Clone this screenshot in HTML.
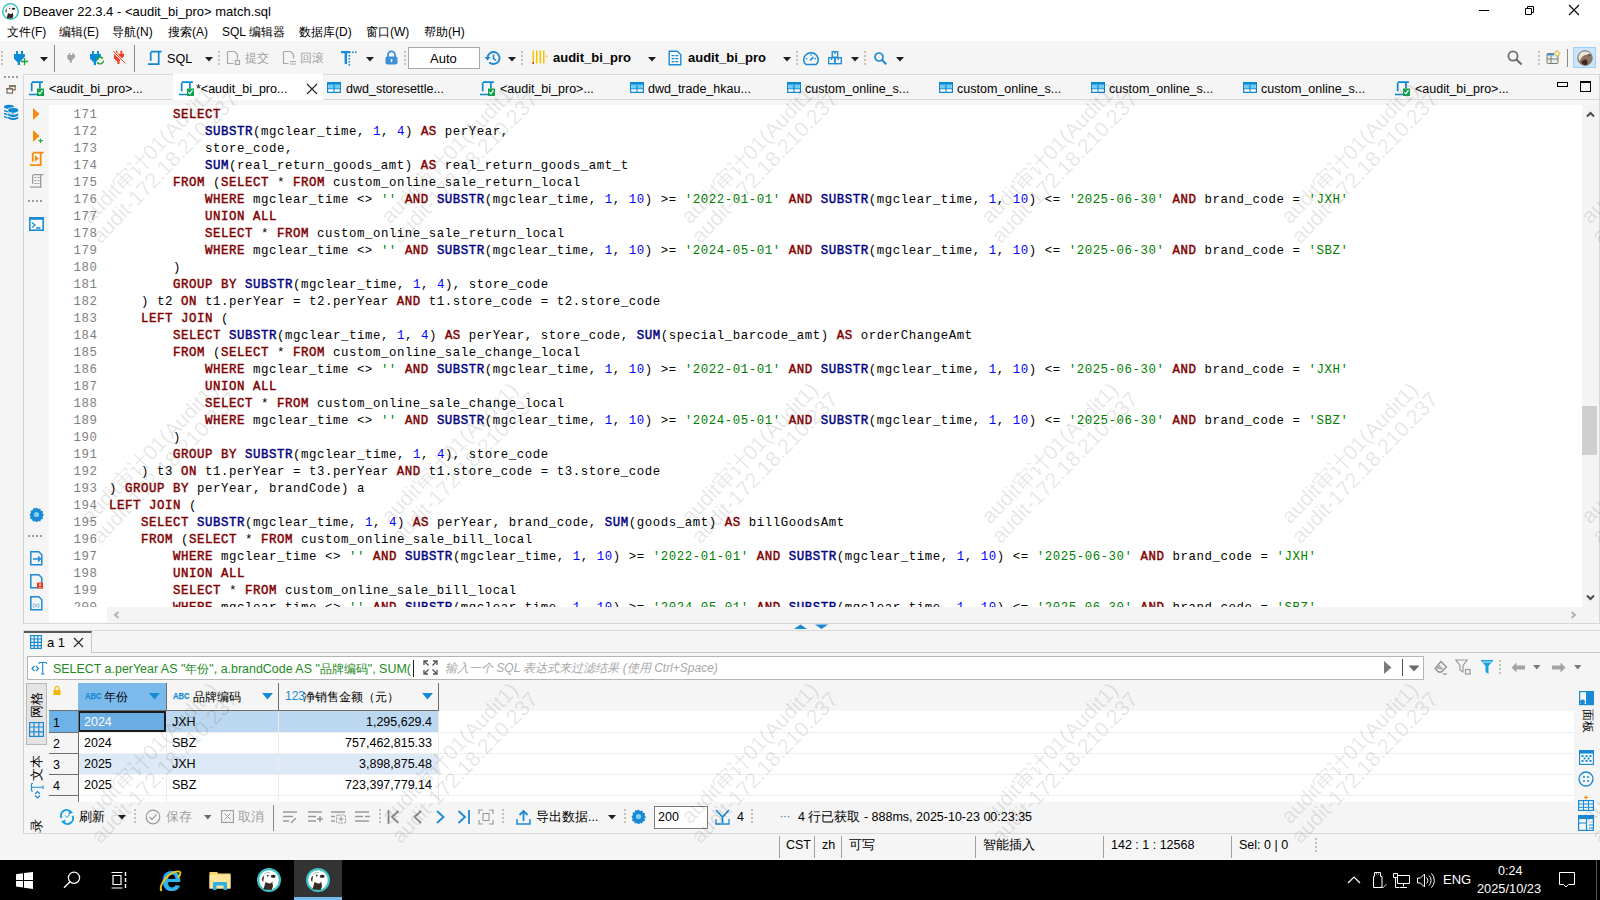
<!DOCTYPE html>
<html><head><meta charset="utf-8">
<style>
*{margin:0;padding:0;box-sizing:border-box}
html,body{width:1600px;height:900px;overflow:hidden;background:#f5f5f5;font-family:"Liberation Sans",sans-serif;font-size:12px;color:#000}
.a{position:absolute}
#title{left:0;top:0;width:1600px;height:22px;background:#fff}
#menu{left:0;top:22px;width:1600px;height:19px;background:#fff}
#tb{left:0;top:41px;width:1600px;height:33px;background:#f5f5f5}
#tabs{left:23px;top:74px;width:1577px;height:26px;background:#f5f5f5;border-top:1px solid #d8d8d8;border-bottom:1px solid #d8d8d8;border-left:1px solid #d8d8d8;border-right:1px solid #d8d8d8}
#lstrip{left:0;top:74px;width:23px;height:760px;background:#f5f5f5}
#editor{left:23px;top:100px;width:1577px;height:523px;background:#f5f5f5;border-left:1px solid #d0d0d0;border-right:1px solid #d8d8d8}
#ruler{left:24px;top:100px;width:25px;height:523px;background:#f5f5f5}
#code{left:49px;top:105px;width:1533px;height:502px;background:#fff;overflow:hidden}
#vscroll{left:1582px;top:105px;width:17px;height:518px;background:#f4f4f4}
#hscroll{left:107px;top:607px;width:1475px;height:16px;background:#f4f4f4}
#gutwhite{left:49px;top:607px;width:58px;height:16px;background:#fff}
#sash{left:23px;top:623px;width:1577px;height:8px;background:#f5f5f5;border-top:1px solid #d8d8d8;border-bottom:1px solid #d8d8d8}
#results{left:23px;top:631px;width:1577px;height:203px;background:#f5f5f5;border-left:1px solid #d0d0d0;border-bottom:1px solid #d8d8d8}
#status{left:0;top:834px;width:1600px;height:26px;background:#f5f5f5}
#taskbar{left:0;top:860px;width:1600px;height:40px;background:#000}
pre,.mono{font-family:"Liberation Mono",monospace;font-size:12.4px;letter-spacing:0.56px}
.ln{position:absolute;line-height:17px;height:17px;left:0;width:48.5px;text-align:right;color:#808080}
.cl{position:absolute;line-height:17px;height:17px;left:60px;white-space:pre;color:#000}
.k{color:#800000;font-weight:normal;-webkit-text-stroke:0.45px #800000}
.f{color:#000080;font-weight:normal;-webkit-text-stroke:0.45px #000080}
.n{color:#0000ff}
.s{color:#008000}
.mi{top:2px;font-size:12px;line-height:16px;white-space:nowrap}
.tt{top:6px;font-size:12.5px;line-height:16px;white-space:nowrap}
.rot{transform:rotate(-90deg);transform-origin:0 0;font-size:12.5px;line-height:16px;white-space:nowrap}
.rot90{transform:rotate(90deg);transform-origin:0 0;font-size:12px;line-height:14px;white-space:nowrap}
.vt{writing-mode:vertical-rl;font-size:12px;line-height:12px;white-space:nowrap}
.abc{font-size:9.4px;line-height:10px;font-weight:bold;color:#1a8ad4;letter-spacing:0;-webkit-text-stroke:0.25px #1a8ad4;transform:scaleX(0.82);transform-origin:0 0}
.hd{top:689px;font-size:11.7px;line-height:16px;white-space:nowrap}
.gc{font-size:12.5px;line-height:16px;white-space:nowrap}
.gr{width:152px;text-align:right}
.bt{top:809px;font-size:12.5px;line-height:16px;white-space:nowrap}
.sep{top:836px;width:1px;height:22px;background:#a0a0a0}
.st{top:837px;font-size:12.5px;line-height:16px;white-space:nowrap}
.wm{width:260px;height:42px;text-align:center;font-size:21.2px;line-height:21px;color:rgba(0,0,0,0.11);transform:rotate(-46deg);white-space:nowrap}
</style></head><body>
<svg width="0" height="0" style="position:absolute">
<defs>
<symbol id="plug" viewBox="0 0 16 16"><path d="M4 0.9h1.9v3.2H4zM9 0.9h2v3.2H9z"/><path d="M2 3.9H12.9V6.5L8 12V14.9H5.8V12.5L2 8.8Z"/></symbol>
<symbol id="dd" viewBox="0 0 8 5"><path d="M0 0h8L4 4.5z" fill="#1e1e1e"/></symbol>
<symbol id="grip" viewBox="0 0 3 16"><g fill="#c9bfae"><rect x="0" y="0" width="2" height="2"/><rect x="0" y="4" width="2" height="2"/><rect x="0" y="8" width="2" height="2"/><rect x="0" y="12" width="2" height="2"/></g></symbol>
<symbol id="sqlic" viewBox="0 0 16 16"><path d="M5 2.6H15.6M4.7 3V11.8M12.7 2.6V15.9M1.9 15.1H12.9" fill="none" stroke="#0a88d4" stroke-width="1.7"/></symbol>
<symbol id="tbl" viewBox="0 0 14 11"><rect x="0.6" y="0.6" width="12.8" height="9.8" fill="#fff" stroke="#0a88d4" stroke-width="1.2"/><rect x="0" y="0" width="14" height="2.8" fill="#0a88d4"/><rect x="1.2" y="2.8" width="11.6" height="3.4" fill="#6ccdf0"/><path d="M0.6 6.7H13.4M7 2.8V10.4" stroke="#0a88d4" stroke-width="1.1"/></symbol>
<symbol id="scr" viewBox="0 0 16 16"><path d="M4 2.6H14.9M3.7 3V11.8M11.9 2.6V9M0.9 15H9" fill="none" stroke="#0a88d4" stroke-width="1.7"/><rect x="9" y="9" width="7" height="7.6" fill="#12a34a"/><path d="M10.3 12.6l1.6 1.8 2.6-3.8" fill="none" stroke="#fff" stroke-width="1.1"/></symbol>
<symbol id="beaver" viewBox="0 0 24 24"><circle cx="12" cy="12" r="10.9" fill="#fff" stroke="#3ec4c8" stroke-width="2.2"/><path d="M6.5 21.5L8.5 14Q11.5 16 14 15.2L15.3 13.5L16 18.5L14.5 22Z" fill="#3a2a22"/><ellipse cx="16.2" cy="8.2" rx="2.4" ry="1.5" fill="#2a1e18"/><circle cx="10.8" cy="7.6" r="0.9" fill="#2a1e18"/><path d="M4.8 12Q5 8.5 7.2 7.8L6.2 14Z" fill="#4a3a30"/><path d="M6.5 6.5Q9.5 3.8 13 4.5" fill="none" stroke="#999" stroke-width="0.7"/></symbol></defs></svg>
<div id="title" class="a">
<svg class="a" style="left:2px;top:3px" width="17" height="17" viewBox="0 0 24 24"><use href="#beaver"/></svg>
<div class="a" id="ttxt" style="left:23px;top:4px;font-size:13px;line-height:16px;white-space:nowrap">DBeaver 22.3.4 - &lt;audit_bi_pro&gt; match.sql</div>
<svg class="a" style="left:1477px;top:4px" width="14" height="14"><path d="M2 6.5H12" stroke="#000" stroke-width="1"/></svg>
<svg class="a" style="left:1522px;top:3px" width="14" height="14"><path d="M3.5 5.5h6v6h-6z M5.5 5.5v-2h6v6h-2" fill="none" stroke="#000" stroke-width="1"/></svg>
<svg class="a" style="left:1567px;top:3px" width="14" height="14"><path d="M2 2L12 12M12 2L2 12" stroke="#000" stroke-width="1.1"/></svg>
</div>
<div id="menu" class="a">
<span class="a mi" style="left:7px">文件(F)</span>
<span class="a mi" style="left:59px">编辑(E)</span>
<span class="a mi" style="left:112px">导航(N)</span>
<span class="a mi" style="left:168px">搜索(A)</span>
<span class="a mi" style="left:222px">SQL 编辑器</span>
<span class="a mi" style="left:299px">数据库(D)</span>
<span class="a mi" style="left:366px">窗口(W)</span>
<span class="a mi" style="left:424px">帮助(H)</span>
</div>
<div id="tb" class="a">
<svg class="a" style="left:1px;top:10px" width="3" height="16"><use href="#grip"/></svg>
<svg class="a" style="left:12px;top:9px;fill:#0a8bd6" width="16" height="16" viewBox="0 0 16 16"><use href="#plug"/></svg>
<svg class="a" style="left:20px;top:16px" width="9" height="9"><path d="M4.5 1v7.2M1 4.5h7.2" stroke="#14a83a" stroke-width="1.3"/></svg>
<svg class="a" style="left:40px;top:16px" width="8" height="5"><use href="#dd"/></svg>
<div class="a" style="left:54px;top:4px;width:1px;height:27px;background:#8a8a8a"></div>
<svg class="a" style="left:66px;top:10px;fill:#a2a2a2" width="13" height="14" viewBox="1 0 13 16"><use href="#plug"/></svg>
<svg class="a" style="left:88px;top:9px;fill:#0a8bd6" width="16" height="16" viewBox="0 0 16 16"><use href="#plug"/></svg>
<svg class="a" style="left:95px;top:15px" width="10" height="9"><path d="M1.5 4.5a3.5 3.5 0 0 1 6-2.3M8.5 4.5a3.5 3.5 0 0 1-6 2.3" fill="none" stroke="#1fa33a" stroke-width="1.3"/><path d="M6.5 0.5l2 2-2.2.6zM3.5 8.5l-2-2 2.2-.6z" fill="#1fa33a"/></svg>
<svg class="a" style="left:112px;top:9px;fill:#f03c1e" width="15" height="15" viewBox="0 0 16 16"><use href="#plug"/></svg>
<svg class="a" style="left:113px;top:10px" width="13" height="13"><path d="M0.5 0.5L12.5 12.5" stroke="#f7f7f7" stroke-width="2.4"/><path d="M0.5 0.5L12.5 12.5" stroke="#f03c1e" stroke-width="1"/></svg>
<div class="a" style="left:134px;top:4px;width:1px;height:27px;background:#8a8a8a"></div>
<svg class="a" style="left:146px;top:8px" width="16" height="16" viewBox="0 0 16 16"><use href="#sqlic"/></svg>
<span class="a" style="left:167px;top:10px;font-size:12.6px;line-height:16px">SQL</span>
<svg class="a" style="left:205px;top:16px" width="8" height="5"><use href="#dd"/></svg>
<svg class="a" style="left:218px;top:10px" width="3" height="16"><use href="#grip"/></svg>
<svg class="a" style="left:226px;top:9px" width="15" height="16"><path d="M1.5 1.5h7l3 3v5M1.5 1.5v12h6" fill="none" stroke="#a8a8a8" stroke-width="1.2"/><rect x="9.5" y="10.5" width="4" height="4" fill="none" stroke="#a8a8a8" stroke-width="1.2"/></svg>
<span class="a" style="left:245px;top:9px;font-size:12px;line-height:16px;color:#a0a0a0">提交</span>
<svg class="a" style="left:282px;top:9px" width="15" height="16"><path d="M1.5 1.5h7l3 3v4M1.5 1.5v12h5" fill="none" stroke="#a8a8a8" stroke-width="1.2"/><path d="M8 11.5h6M8 14h6" stroke="#a8a8a8" stroke-width="1"/></svg>
<span class="a" style="left:300px;top:9px;font-size:12px;line-height:16px;color:#a0a0a0">回滚</span>
<svg class="a" style="left:341px;top:9px" width="16" height="16"><path d="M0 1h9.5v2.3H6V14H3.6V3.3H0z" fill="#1a8ad4"/><g fill="#1a8ad4"><rect x="11" y="1.5" width="1.6" height="1.6"/><rect x="14" y="1.5" width="1.6" height="1.6"/><rect x="7.5" y="5" width="1.6" height="1.6"/><rect x="7.5" y="8" width="1.6" height="1.6"/><rect x="7.5" y="11" width="1.6" height="1.6"/><rect x="7.5" y="14" width="1.6" height="1.6"/></g></svg>
<svg class="a" style="left:366px;top:16px" width="8" height="5"><use href="#dd"/></svg>
<svg class="a" style="left:385px;top:9px" width="13" height="15"><path d="M3 7.5V4.8a3.5 3.5 0 0 1 7 0V7.5" fill="none" stroke="#3d8fd8" stroke-width="1.8"/><rect x="0.5" y="6.5" width="12" height="8" rx="2" fill="#3d8fd8"/><rect x="5.7" y="9" width="1.6" height="3" fill="#fff"/></svg>
<svg class="a" style="left:404px;top:10px" width="3" height="16"><use href="#grip"/></svg>
<div class="a" style="left:408px;top:6px;width:72px;height:22px;background:#fff;border:1px solid #a8a8a8"></div>
<span class="a" style="left:430px;top:10px;font-size:13px;line-height:16px">Auto</span>
<svg class="a" style="left:484px;top:9px" width="17" height="16"><path d="M3.5 8a6 6 0 1 1 1.8 4.3" fill="none" stroke="#1a8ad4" stroke-width="1.8"/><path d="M0.5 7h6l-3 3.5z" fill="#1a8ad4"/><path d="M9.5 4.5v4l2.5 2" fill="none" stroke="#1a8ad4" stroke-width="1.6"/></svg>
<svg class="a" style="left:508px;top:16px" width="8" height="5"><use href="#dd"/></svg>
<svg class="a" style="left:521px;top:10px" width="3" height="16"><use href="#grip"/></svg>
<svg class="a" style="left:532px;top:9px" width="16" height="15"><g fill="#f5c400"><rect x="0.5" y="0.5" width="1.5" height="13"/><rect x="4" y="0.5" width="1.5" height="13"/><rect x="7.5" y="0.5" width="1.5" height="13"/><rect x="11" y="0.5" width="1.5" height="13"/><rect x="13.8" y="5.5" width="1.5" height="1.5"/></g><rect x="0.5" y="12" width="1.5" height="2" fill="#e52d2d"/></svg>
<span class="a" style="left:553px;top:9px;font-size:13px;line-height:16px;font-weight:bold">audit_bi_pro</span>
<svg class="a" style="left:648px;top:16px" width="8" height="5"><use href="#dd"/></svg>
<svg class="a" style="left:668px;top:9px" width="14" height="16"><path d="M1.2 1.2h8l3.6 3.6v10H1.2z" fill="#fff" stroke="#1a8ad4" stroke-width="1.4"/><g fill="#1a8ad4"><rect x="3.5" y="5" width="3" height="1.3"/><rect x="7.3" y="5" width="3" height="1.3"/><rect x="3.5" y="8" width="3" height="1.3"/><rect x="7.3" y="8" width="3" height="1.3"/><rect x="3.5" y="11" width="3" height="1.3"/><rect x="7.3" y="11" width="3" height="1.3"/></g></svg>
<span class="a" style="left:688px;top:9px;font-size:13px;line-height:16px;font-weight:bold">audit_bi_pro</span>
<svg class="a" style="left:783px;top:16px" width="8" height="5"><use href="#dd"/></svg>
<svg class="a" style="left:796px;top:10px" width="3" height="16"><use href="#grip"/></svg>
<svg class="a" style="left:802px;top:9px" width="18" height="16"><path d="M2.2 12.2A7.2 7.2 0 1 1 15.8 12.2L14 14.6H4Z" fill="none" stroke="#1a8ad4" stroke-width="1.5" stroke-linejoin="round"/><path d="M8 10.5l3.5-3.5" stroke="#1a8ad4" stroke-width="1.7"/><g fill="#1a8ad4"><rect x="4" y="8" width="1.4" height="1.4"/><rect x="8.3" y="4.3" width="1.4" height="1.4"/><rect x="12.6" y="8" width="1.4" height="1.4"/></g></svg>
<svg class="a" style="left:828px;top:10px" width="14" height="14"><g fill="none" stroke="#1a8ad4" stroke-width="1.3"><rect x="4.2" y="0.7" width="5.5" height="5.5"/><rect x="0.7" y="6.7" width="6.3" height="6"/><rect x="7" y="6.7" width="6.3" height="6"/></g><g fill="#1a8ad4"><rect x="6.3" y="1" width="1.3" height="2"/><rect x="3" y="7" width="1.3" height="2"/><rect x="9.5" y="7" width="1.3" height="2"/></g></svg>
<svg class="a" style="left:851px;top:16px" width="8" height="5"><use href="#dd"/></svg>
<svg class="a" style="left:864px;top:10px" width="3" height="16"><use href="#grip"/></svg>
<svg class="a" style="left:874px;top:11px" width="13" height="13"><circle cx="5" cy="5" r="4" fill="none" stroke="#1a8ad4" stroke-width="1.7"/><path d="M8 8l4.2 4.2" stroke="#1a8ad4" stroke-width="2"/></svg>
<svg class="a" style="left:896px;top:16px" width="8" height="5"><use href="#dd"/></svg>
<svg class="a" style="left:1507px;top:9px" width="16" height="16"><circle cx="6" cy="6" r="4.6" fill="none" stroke="#707070" stroke-width="1.8"/><path d="M9.5 9.5l5 5" stroke="#707070" stroke-width="2.2"/></svg>
<svg class="a" style="left:1538px;top:10px" width="3" height="16"><use href="#grip"/></svg>
<svg class="a" style="left:1546px;top:9px" width="15" height="15"><rect x="1" y="3.5" width="11" height="10" rx="1" fill="#dff0fb" stroke="#8a7a58" stroke-width="1"/><rect x="1" y="3.5" width="7" height="2" fill="#4a90d9"/><path d="M1 9h11M5 5.5v8" stroke="#8a7a58" stroke-width="1"/><path d="M11 0.5l3 3-3 3-3-3z" fill="#fff7d0" stroke="#c89a10" stroke-width="1"/></svg>
<div class="a" style="left:1567px;top:8px;width:1px;height:18px;background:#8a8a8a"></div>
<div class="a" style="left:1573px;top:6px;width:23px;height:21px;background:#cce4f7;border:1px solid #99d1ff"></div>
<svg class="a" style="left:1577px;top:9px" width="16" height="16"><circle cx="8" cy="8" r="7.5" fill="#8f7565"/><path d="M1.5 6.5Q3 1 9 1.2Q12.5 1.8 14 4.5Q10 3.5 6 6Q3.5 8 2.5 11Q1.2 9 1.5 6.5z" fill="#efe6da"/><path d="M4 12.5Q6 9 9 9.5Q11 10 10.5 15Q7 16 4 12.5z" fill="#3a2a22"/><path d="M11.5 4.5l1.5 1" stroke="#2a1e18" stroke-width="1.2"/><circle cx="8" cy="8" r="7.4" fill="none" stroke="#777" stroke-width="0.6"/></svg>
</div>
<div id="lstrip" class="a">
<svg class="a" style="left:4px;top:2px" width="16" height="3"><g fill="#a09a90"><rect x="0" y="0" width="2" height="2"/><rect x="4" y="0" width="2" height="2"/><rect x="8" y="0" width="2" height="2"/><rect x="12" y="0" width="2" height="2"/></g></svg>
<svg class="a" style="left:6px;top:11px" width="10" height="9"><path d="M3.8 0.8h5.4v4h-5.4z" fill="none" stroke="#7a6e5e" stroke-width="1.2"/><rect x="3.2" y="0.2" width="6.6" height="1.6" fill="#7a6e5e"/><rect x="1" y="3.5" width="5.5" height="4.6" fill="#fff" stroke="#7a6e5e" stroke-width="1.2"/><rect x="0.4" y="3" width="6.6" height="1.6" fill="#7a6e5e"/></svg>
<svg class="a" style="left:3px;top:30px" width="17" height="17"><g fill="#0a88d4"><ellipse cx="6" cy="2.8" rx="5" ry="2"/><path d="M1 5.8Q6 8.5 11 5.8V7.2Q6 10 1 7.2z"/><path d="M1 8.8Q6 11.5 11 8.8V10.2Q6 13 1 10.2z"/><path d="M1 11.8Q6 14.5 11 11.8V13.2Q6 16 1 13.2z"/></g><g fill="#0a88d4" stroke="#f5f5f5" stroke-width="1.2" paint-order="stroke"><ellipse cx="10.2" cy="6.3" rx="5" ry="2.4"/><path d="M5.2 9.3Q10.2 12.3 15.2 9.3V11.5Q10.2 14.5 5.2 11.5z"/><path d="M5.2 12.5Q10.2 15.5 15.2 12.5V14.6Q10.2 17.6 5.2 14.6z"/></g></svg>
</div>
<div id="tabs" class="a">
<div class="a" style="left:149px;top:-1px;width:150px;height:26px;background:#fff"></div>
<svg class="a" style="left:4px;top:4px" width="16" height="17" viewBox="0 0 16 17"><use href="#scr"/></svg>
<span class="a tt" style="left:25px">&lt;audit_bi_pro&gt;...</span>
<svg class="a" style="left:154px;top:4px" width="16" height="17" viewBox="0 0 16 17"><use href="#scr"/></svg>
<span class="a tt" style="left:172px">*&lt;audit_bi_pro...</span>
<svg class="a" style="left:282px;top:8px" width="12" height="12"><path d="M1 1L11 11M11 1L1 11" stroke="#222" stroke-width="1.1"/></svg>
<svg class="a" style="left:303px;top:7px" width="14" height="11" viewBox="0 0 14 11"><use href="#tbl"/></svg>
<span class="a tt" style="left:322px">dwd_storesettle...</span>
<svg class="a" style="left:455px;top:4px" width="16" height="17" viewBox="0 0 16 17"><use href="#scr"/></svg>
<span class="a tt" style="left:476px">&lt;audit_bi_pro&gt;...</span>
<svg class="a" style="left:606px;top:7px" width="14" height="11" viewBox="0 0 14 11"><use href="#tbl"/></svg>
<span class="a tt" style="left:624px">dwd_trade_hkau...</span>
<svg class="a" style="left:763px;top:7px" width="14" height="11" viewBox="0 0 14 11"><use href="#tbl"/></svg>
<span class="a tt" style="left:781px">custom_online_s...</span>
<svg class="a" style="left:915px;top:7px" width="14" height="11" viewBox="0 0 14 11"><use href="#tbl"/></svg>
<span class="a tt" style="left:933px">custom_online_s...</span>
<svg class="a" style="left:1067px;top:7px" width="14" height="11" viewBox="0 0 14 11"><use href="#tbl"/></svg>
<span class="a tt" style="left:1085px">custom_online_s...</span>
<svg class="a" style="left:1219px;top:7px" width="14" height="11" viewBox="0 0 14 11"><use href="#tbl"/></svg>
<span class="a tt" style="left:1237px">custom_online_s...</span>
<svg class="a" style="left:1370px;top:4px" width="16" height="17" viewBox="0 0 16 17"><use href="#scr"/></svg>
<span class="a tt" style="left:1391px">&lt;audit_bi_pro&gt;...</span>
<div class="a" style="left:1533px;top:7px;width:11px;height:5px;border:1.5px solid #000"></div>
<div class="a" style="left:1556px;top:6px;width:11px;height:11px;border:1.5px solid #000;border-top-width:2.5px"></div>
</div>
<div id="editor" class="a"></div>
<div id="ruler" class="a">
<svg class="a" style="left:9px;top:8px" width="7" height="12"><path d="M0 0L6.5 6L0 12z" fill="#f78a0f"/></svg>
<svg class="a" style="left:9px;top:30px" width="11" height="13"><path d="M0 0L6.5 6L0 12z" fill="#f78a0f"/><path d="M7.5 8.5v4.5M5.3 10.7h4.5" stroke="#2aa84a" stroke-width="1.2"/></svg>
<svg class="a" style="left:4px;top:50px" width="16" height="16"><path d="M5 2.6H15.6M4.7 3V11.8M12.7 2.6V15.9M1.9 15.1H12.9" fill="none" stroke="#f78a0f" stroke-width="1.8"/><path d="M6.8 5.2l4 3.3-4 3.3z" fill="#f78a0f"/></svg>
<svg class="a" style="left:4px;top:72px" width="16" height="16"><path d="M5 2.6H15.6M4.7 3V11.8M12.7 2.6V15.9M1.9 15.1H12.9" fill="none" stroke="#9a9a9a" stroke-width="1.3"/><path d="M6.5 5.5h2M9.5 5.5h2M6.5 8.5h2M9.5 8.5h2M6.5 11.5h2M9.5 11.5h2" stroke="#9a9a9a" stroke-width="1"/></svg>
<svg class="a" style="left:4px;top:100px" width="16" height="3"><g fill="#a09a90"><rect x="0" y="0" width="2" height="2"/><rect x="4" y="0" width="2" height="2"/><rect x="8" y="0" width="2" height="2"/><rect x="12" y="0" width="2" height="2"/></g></svg>
<svg class="a" style="left:5px;top:117px" width="15" height="14"><rect x="0.8" y="0.8" width="13.4" height="12.4" fill="#fff" stroke="#1a8ad4" stroke-width="1.6"/><rect x="0.8" y="0.8" width="13.4" height="2" fill="#1a8ad4"/><path d="M3 5.5l3 2.5-3 2.5M7 11h4.5" fill="none" stroke="#1a8ad4" stroke-width="1.3"/></svg>
<svg class="a" style="left:5px;top:407px" width="15" height="15"><path d="M7.5 0.5l1.6 1.5 2.2-.5.6 2.2 2.2.6-.5 2.2 1.5 1.5-1.5 1.6.5 2.2-2.2.6-.6 2.2-2.2-.5-1.6 1.5-1.5-1.5-2.2.5-.6-2.2-2.2-.6.5-2.2L.5 7.5 2 6l-.5-2.2 2.2-.6.6-2.2L6 1.5z" fill="#1a8ad4"/><circle cx="7.5" cy="7.5" r="2.6" fill="#7fd0f5"/></svg>
<svg class="a" style="left:4px;top:435px" width="16" height="3"><g fill="#a09a90"><rect x="0" y="0" width="2" height="2"/><rect x="4" y="0" width="2" height="2"/><rect x="8" y="0" width="2" height="2"/><rect x="12" y="0" width="2" height="2"/></g></svg>
<svg class="a" style="left:6px;top:451px" width="13" height="15"><path d="M0.8 0.8h8l3 3v10H0.8z" fill="none" stroke="#1a8ad4" stroke-width="1.5"/><path d="M3 8h7M8 5.5l2.5 2.5L8 10.5" fill="none" stroke="#1a8ad4" stroke-width="1.3"/></svg>
<svg class="a" style="left:6px;top:474px" width="13" height="15"><path d="M0.8 0.8h8l3 3v10H0.8z" fill="none" stroke="#1a8ad4" stroke-width="1.5"/><rect x="7" y="8.5" width="6" height="6" fill="#f03c1e"/><path d="M10 9.5v2.5M10 13v1" stroke="#fff" stroke-width="1.2"/></svg>
<svg class="a" style="left:6px;top:496px" width="13" height="15"><path d="M0.8 0.8h8l3 3v10H0.8z" fill="none" stroke="#1a8ad4" stroke-width="1.5"/><text x="6" y="11" font-size="6" text-anchor="middle" fill="#1a8ad4" font-family="Liberation Sans">(x)</text></svg>
</div>

<div id="code" class="a mono"><div class="a" style="left:0;top:2px;width:1533px;height:502px"><div class="ln" style="top:0px">171</div><div class="cl" style="top:0px">        <span class="k">SELECT</span></div>
<div class="ln" style="top:17px">172</div><div class="cl" style="top:17px">            <span class="f">SUBSTR</span>(mgclear_time, <span class="n">1</span>, <span class="n">4</span>) <span class="k">AS</span> perYear,</div>
<div class="ln" style="top:34px">173</div><div class="cl" style="top:34px">            store_code,</div>
<div class="ln" style="top:51px">174</div><div class="cl" style="top:51px">            <span class="f">SUM</span>(real_return_goods_amt) <span class="k">AS</span> real_return_goods_amt_t</div>
<div class="ln" style="top:68px">175</div><div class="cl" style="top:68px">        <span class="k">FROM</span> (<span class="k">SELECT</span> * <span class="k">FROM</span> custom_online_sale_return_local</div>
<div class="ln" style="top:85px">176</div><div class="cl" style="top:85px">            <span class="k">WHERE</span> mgclear_time &lt;&gt; <span class="s">&#x27;&#x27;</span> <span class="k">AND</span> <span class="f">SUBSTR</span>(mgclear_time, <span class="n">1</span>, <span class="n">10</span>) &gt;= <span class="s">&#x27;2022-01-01&#x27;</span> <span class="k">AND</span> <span class="f">SUBSTR</span>(mgclear_time, <span class="n">1</span>, <span class="n">10</span>) &lt;= <span class="s">&#x27;2025-06-30&#x27;</span> <span class="k">AND</span> brand_code = <span class="s">&#x27;JXH&#x27;</span></div>
<div class="ln" style="top:102px">177</div><div class="cl" style="top:102px">            <span class="k">UNION</span> <span class="k">ALL</span></div>
<div class="ln" style="top:119px">178</div><div class="cl" style="top:119px">            <span class="k">SELECT</span> * <span class="k">FROM</span> custom_online_sale_return_local</div>
<div class="ln" style="top:136px">179</div><div class="cl" style="top:136px">            <span class="k">WHERE</span> mgclear_time &lt;&gt; <span class="s">&#x27;&#x27;</span> <span class="k">AND</span> <span class="f">SUBSTR</span>(mgclear_time, <span class="n">1</span>, <span class="n">10</span>) &gt;= <span class="s">&#x27;2024-05-01&#x27;</span> <span class="k">AND</span> <span class="f">SUBSTR</span>(mgclear_time, <span class="n">1</span>, <span class="n">10</span>) &lt;= <span class="s">&#x27;2025-06-30&#x27;</span> <span class="k">AND</span> brand_code = <span class="s">&#x27;SBZ&#x27;</span></div>
<div class="ln" style="top:153px">180</div><div class="cl" style="top:153px">        )</div>
<div class="ln" style="top:170px">181</div><div class="cl" style="top:170px">        <span class="k">GROUP</span> <span class="k">BY</span> <span class="f">SUBSTR</span>(mgclear_time, <span class="n">1</span>, <span class="n">4</span>), store_code</div>
<div class="ln" style="top:187px">182</div><div class="cl" style="top:187px">    ) t2 <span class="k">ON</span> t1.perYear = t2.perYear <span class="k">AND</span> t1.store_code = t2.store_code</div>
<div class="ln" style="top:204px">183</div><div class="cl" style="top:204px">    <span class="k">LEFT</span> <span class="k">JOIN</span> (</div>
<div class="ln" style="top:221px">184</div><div class="cl" style="top:221px">        <span class="k">SELECT</span> <span class="f">SUBSTR</span>(mgclear_time, <span class="n">1</span>, <span class="n">4</span>) <span class="k">AS</span> perYear, store_code, <span class="f">SUM</span>(special_barcode_amt) <span class="k">AS</span> orderChangeAmt</div>
<div class="ln" style="top:238px">185</div><div class="cl" style="top:238px">        <span class="k">FROM</span> (<span class="k">SELECT</span> * <span class="k">FROM</span> custom_online_sale_change_local</div>
<div class="ln" style="top:255px">186</div><div class="cl" style="top:255px">            <span class="k">WHERE</span> mgclear_time &lt;&gt; <span class="s">&#x27;&#x27;</span> <span class="k">AND</span> <span class="f">SUBSTR</span>(mgclear_time, <span class="n">1</span>, <span class="n">10</span>) &gt;= <span class="s">&#x27;2022-01-01&#x27;</span> <span class="k">AND</span> <span class="f">SUBSTR</span>(mgclear_time, <span class="n">1</span>, <span class="n">10</span>) &lt;= <span class="s">&#x27;2025-06-30&#x27;</span> <span class="k">AND</span> brand_code = <span class="s">&#x27;JXH&#x27;</span></div>
<div class="ln" style="top:272px">187</div><div class="cl" style="top:272px">            <span class="k">UNION</span> <span class="k">ALL</span></div>
<div class="ln" style="top:289px">188</div><div class="cl" style="top:289px">            <span class="k">SELECT</span> * <span class="k">FROM</span> custom_online_sale_change_local</div>
<div class="ln" style="top:306px">189</div><div class="cl" style="top:306px">            <span class="k">WHERE</span> mgclear_time &lt;&gt; <span class="s">&#x27;&#x27;</span> <span class="k">AND</span> <span class="f">SUBSTR</span>(mgclear_time, <span class="n">1</span>, <span class="n">10</span>) &gt;= <span class="s">&#x27;2024-05-01&#x27;</span> <span class="k">AND</span> <span class="f">SUBSTR</span>(mgclear_time, <span class="n">1</span>, <span class="n">10</span>) &lt;= <span class="s">&#x27;2025-06-30&#x27;</span> <span class="k">AND</span> brand_code = <span class="s">&#x27;SBZ&#x27;</span></div>
<div class="ln" style="top:323px">190</div><div class="cl" style="top:323px">        )</div>
<div class="ln" style="top:340px">191</div><div class="cl" style="top:340px">        <span class="k">GROUP</span> <span class="k">BY</span> <span class="f">SUBSTR</span>(mgclear_time, <span class="n">1</span>, <span class="n">4</span>), store_code</div>
<div class="ln" style="top:357px">192</div><div class="cl" style="top:357px">    ) t3 <span class="k">ON</span> t1.perYear = t3.perYear <span class="k">AND</span> t1.store_code = t3.store_code</div>
<div class="ln" style="top:374px">193</div><div class="cl" style="top:374px">) <span class="k">GROUP</span> <span class="k">BY</span> perYear, brandCode) a</div>
<div class="ln" style="top:391px">194</div><div class="cl" style="top:391px"><span class="k">LEFT</span> <span class="k">JOIN</span> (</div>
<div class="ln" style="top:408px">195</div><div class="cl" style="top:408px">    <span class="k">SELECT</span> <span class="f">SUBSTR</span>(mgclear_time, <span class="n">1</span>, <span class="n">4</span>) <span class="k">AS</span> perYear, brand_code, <span class="f">SUM</span>(goods_amt) <span class="k">AS</span> billGoodsAmt</div>
<div class="ln" style="top:425px">196</div><div class="cl" style="top:425px">    <span class="k">FROM</span> (<span class="k">SELECT</span> * <span class="k">FROM</span> custom_online_sale_bill_local</div>
<div class="ln" style="top:442px">197</div><div class="cl" style="top:442px">        <span class="k">WHERE</span> mgclear_time &lt;&gt; <span class="s">&#x27;&#x27;</span> <span class="k">AND</span> <span class="f">SUBSTR</span>(mgclear_time, <span class="n">1</span>, <span class="n">10</span>) &gt;= <span class="s">&#x27;2022-01-01&#x27;</span> <span class="k">AND</span> <span class="f">SUBSTR</span>(mgclear_time, <span class="n">1</span>, <span class="n">10</span>) &lt;= <span class="s">&#x27;2025-06-30&#x27;</span> <span class="k">AND</span> brand_code = <span class="s">&#x27;JXH&#x27;</span></div>
<div class="ln" style="top:459px">198</div><div class="cl" style="top:459px">        <span class="k">UNION</span> <span class="k">ALL</span></div>
<div class="ln" style="top:476px">199</div><div class="cl" style="top:476px">        <span class="k">SELECT</span> * <span class="k">FROM</span> custom_online_sale_bill_local</div>
<div class="ln" style="top:493px">200</div><div class="cl" style="top:493px">        <span class="k">WHERE</span> mgclear_time &lt;&gt; <span class="s">&#x27;&#x27;</span> <span class="k">AND</span> <span class="f">SUBSTR</span>(mgclear_time, <span class="n">1</span>, <span class="n">10</span>) &gt;= <span class="s">&#x27;2024-05-01&#x27;</span> <span class="k">AND</span> <span class="f">SUBSTR</span>(mgclear_time, <span class="n">1</span>, <span class="n">10</span>) &lt;= <span class="s">&#x27;2025-06-30&#x27;</span> <span class="k">AND</span> brand_code = <span class="s">&#x27;SBZ&#x27;</span></div></div></div>
<div id="vscroll" class="a">
<svg class="a" style="left:4px;top:6px" width="9" height="7"><path d="M1 5.5l3.5-3.5 3.5 3.5" fill="none" stroke="#4a4a4a" stroke-width="2"/></svg>
<div class="a" style="left:0px;top:301px;width:15px;height:49px;background:#cdd0cd"></div>
<svg class="a" style="left:4px;top:489px" width="9" height="7"><path d="M1 1.5l3.5 3.5 3.5-3.5" fill="none" stroke="#4a4a4a" stroke-width="2"/></svg>
</div>
<div id="hscroll" class="a">
<svg class="a" style="left:6px;top:4px" width="7" height="8"><path d="M5.5 1L2 4l3.5 3" fill="none" stroke="#b0b6b0" stroke-width="2"/></svg>
<svg class="a" style="left:1463px;top:4px" width="7" height="8"><path d="M1.5 1l3.5 3-3.5 3" fill="none" stroke="#b0b6b0" stroke-width="2"/></svg>
</div>
<div id="gutwhite" class="a"></div>
<div id="sash" class="a"></div>
<svg class="a" style="left:794px;top:624px" width="35" height="6"><path d="M0 5L6.5 0.5 13 5z M21 0.5H34L27.5 5z" fill="#1a88d0"/></svg>
<div id="results" class="a"></div>
<!-- results tab -->
<div class="a" style="left:24px;top:631px;width:68px;height:22px;background:#f5f5f5;border-top:2px solid #5a5a5a;border-right:1px solid #c8c8c8"></div>
<div class="a" style="left:91px;top:652px;width:1509px;height:1px;background:#c8c8c8"></div>
<svg class="a" style="left:30px;top:635px" width="12" height="14"><g fill="none" stroke="#1a8ad4" stroke-width="1.2"><rect x="0.6" y="0.6" width="10.8" height="12.8"/><path d="M0.6 4h10.8M0.6 7.3h10.8M0.6 10.6h10.8M4.2 0.6v12.8M7.8 0.6v12.8"/></g></svg>
<span class="a" style="left:47px;top:635px;font-size:13px;line-height:16px">a 1</span>
<svg class="a" style="left:73px;top:637px" width="12" height="12"><path d="M1 1L10 10M10 1L1 10" stroke="#222" stroke-width="1.1"/></svg>
<!-- filter -->
<div class="a" style="left:27px;top:656px;width:1397px;height:24px;background:#fff;border:1px solid #b4b4b4"></div>
<svg class="a" style="left:31px;top:660px" width="16" height="16"><path d="M3.5 6L1 8.5 3.5 11M5 6l2.5 2.5L5 11" fill="none" stroke="#1a8ad4" stroke-width="1.2"/><path d="M8 2.5h7.5M11.7 2.5V14M10 14h3.5M8 2.5v1.5M15.5 2.5v1.5" fill="none" stroke="#1a8ad4" stroke-width="1.1"/></svg>
<span class="a" style="left:53px;top:661px;font-size:12.45px;line-height:16px;color:#1e8a1e;white-space:nowrap">SELECT a.perYear AS "年份", a.brandCode AS "品牌编码", SUM(</span>
<div class="a" style="left:413px;top:660px;width:1px;height:17px;background:#222"></div>
<svg class="a" style="left:423px;top:660px" width="15" height="15"><g fill="none" stroke="#505050" stroke-width="1.3"><path d="M1 5V1h4M10 1h4v4M14 10v4h-4M5 14H1v-4"/><path d="M1.5 1.5l4 4M13.5 1.5l-4 4M13.5 13.5l-4-4M1.5 13.5l4-4"/></g></svg>
<span class="a" style="left:445px;top:660px;font-size:12px;line-height:16px;color:#a8a8a8;font-style:italic;white-space:nowrap">输入一个 SQL 表达式来过滤结果 (使用 Ctrl+Space)</span>
<svg class="a" style="left:1384px;top:661px" width="8" height="13"><path d="M0 0L7.5 6.5L0 13z" fill="#7a7a7a"/></svg>
<div class="a" style="left:1402px;top:659px;width:1px;height:17px;background:#505050"></div>
<svg class="a" style="left:1408px;top:665px" width="12" height="7"><path d="M0.5 0.5h11L6 6.5z" fill="#6a6a6a"/></svg>
<svg class="a" style="left:1433px;top:660px" width="15" height="15"><path d="M8 1.5l5.5 5.5-5 5H5.5L2 8.5z" fill="none" stroke="#909090" stroke-width="1.3"/><path d="M2 8.5l4-4 5.5 5.5" fill="#b0b0b0"/><path d="M10 14h4" stroke="#909090" stroke-width="1.2"/></svg>
<svg class="a" style="left:1455px;top:659px" width="16" height="16"><path d="M0.8 1h11.4L8 6.5V13L5 11V6.5z" fill="none" stroke="#9a9a9a" stroke-width="1.2"/><rect x="10.5" y="10.5" width="4.5" height="4.5" fill="none" stroke="#9a9a9a" stroke-width="1.2"/></svg>
<svg class="a" style="left:1480px;top:659px" width="14" height="16"><path d="M0.5 1h13L8.5 7v8L5.5 13V7z" fill="#1aa0e0"/><path d="M3 3h8" stroke="#fff" stroke-width="0.8"/></svg>
<svg class="a" style="left:1499px;top:660px" width="3" height="16"><use href="#grip"/></svg>
<svg class="a" style="left:1511px;top:662px" width="15" height="11"><path d="M0.5 5.5L5.5 0.5V3.5H14V7.5H5.5V10.5z" fill="#a4a4a4"/></svg>
<svg class="a" style="left:1533px;top:665px" width="8" height="5"><path d="M0 0h7.5L3.75 4.5z" fill="#7a7a7a"/></svg>
<svg class="a" style="left:1551px;top:662px" width="15" height="11"><path d="M14.5 5.5L9.5 0.5V3.5H1V7.5H9.5V10.5z" fill="#a4a4a4"/></svg>
<svg class="a" style="left:1574px;top:665px" width="8" height="5"><path d="M0 0h7.5L3.75 4.5z" fill="#7a7a7a"/></svg>
<!-- left vertical tabs -->
<div class="a" style="left:26px;top:683px;width:21px;height:62px;background:#e4e4e4;border:1px solid #b8b8b8"></div>
<span class="a rot" style="left:29px;top:718px">网格</span>
<svg class="a" style="left:29px;top:722px" width="15" height="15"><g fill="none" stroke="#1a8ad4" stroke-width="1.2"><rect x="0.6" y="0.6" width="13.8" height="13.8"/><path d="M0.6 5h13.8M0.6 9.8h13.8M5 0.6v13.8M9.8 0.6v13.8"/></g></svg>
<span class="a rot" style="left:29px;top:781px">文本</span>
<svg class="a" style="left:29px;top:783px" width="16" height="16"><g transform="rotate(-90 8 8)"><path d="M3.5 6L1 8.5 3.5 11M5 6l2.5 2.5L5 11" fill="none" stroke="#1a8ad4" stroke-width="1.2"/><path d="M8 2.5h7.5M11.7 2.5V14M10 14h3.5M8 2.5v1.5M15.5 2.5v1.5" fill="none" stroke="#1a8ad4" stroke-width="1.1"/></g></svg>
<div class="a" style="left:24px;top:800px;width:22px;height:33px;overflow:hidden"><span class="a rot" style="left:5px;top:45px">记录</span></div>
<!-- grid header -->
<div class="a" style="left:49px;top:683px;width:1525px;height:28px;background:#f5f5f5"></div>
<svg class="a" style="left:53px;top:686px" width="8" height="9"><path d="M2 4V2.5a2 2 0 0 1 4 0V4" fill="none" stroke="#f2b600" stroke-width="1.2"/><rect x="0.5" y="4" width="7" height="5" fill="#f2b600"/></svg>
<div class="a" style="left:78px;top:683px;width:88px;height:28px;background:#7cbaec"></div>
<div class="a" style="left:166px;top:683px;width:1px;height:28px;background:#6e6e6e"></div>
<div class="a" style="left:278px;top:683px;width:1px;height:28px;background:#6e6e6e"></div>
<div class="a" style="left:438px;top:683px;width:1px;height:28px;background:#6e6e6e"></div>
<span class="a abc" style="left:85px;top:691px">ABC</span>
<span class="a hd" style="left:104px">年份</span>
<svg class="a" style="left:149px;top:693px" width="11" height="7"><path d="M0 0h11L5.5 6.5z" fill="#1a8ad4"/></svg>
<span class="a abc" style="left:173px;top:691px">ABC</span>
<span class="a hd" style="left:193px">品牌编码</span>
<svg class="a" style="left:262px;top:693px" width="11" height="7"><path d="M0 0h11L5.5 6.5z" fill="#1a8ad4"/></svg>
<span class="a" style="left:285px;top:688px;font-size:12px;line-height:16px;color:#1a8ad4">123</span>
<span class="a hd" style="left:303px">净销售金额（元）</span>
<svg class="a" style="left:422px;top:693px" width="11" height="7"><path d="M0 0h11L5.5 6.5z" fill="#1a8ad4"/></svg>
<!-- grid body -->
<div class="a" style="left:49px;top:711px;width:1525px;height:91px;background:#fff"></div>
<div class="a" style="left:49px;top:711px;width:29px;height:91px;background:#f5f5f5"></div>
<div class="a" style="left:49px;top:711px;width:29px;height:21px;background:#6eb2ea"></div>
<div class="a" style="left:78px;top:711px;width:360px;height:21px;background:#bcd8f0"></div>
<div class="a" style="left:78px;top:753px;width:360px;height:21px;background:#dde9f6"></div>
<div class="a" style="left:78px;top:711px;width:88px;height:21px;background:#6aade4;border:2px solid #1a1a1a"></div>
<div class="a" style="left:49px;top:710px;width:390px;height:1px;background:#6e6e6e"></div>
<div class="a" style="left:49px;top:732px;width:29px;height:1px;background:#6e6e6e"></div>
<div class="a" style="left:49px;top:753px;width:29px;height:1px;background:#6e6e6e"></div>
<div class="a" style="left:49px;top:774px;width:29px;height:1px;background:#6e6e6e"></div>
<div class="a" style="left:49px;top:795px;width:29px;height:1px;background:#6e6e6e"></div>
<div class="a" style="left:78px;top:711px;width:1px;height:91px;background:#6e6e6e"></div>
<div class="a" style="left:79px;top:732px;width:1495px;height:1px;background:#f0f0f0"></div>
<div class="a" style="left:79px;top:753px;width:1495px;height:1px;background:#f0f0f0"></div>
<div class="a" style="left:79px;top:774px;width:1495px;height:1px;background:#f0f0f0"></div>
<div class="a" style="left:79px;top:795px;width:1495px;height:1px;background:#f0f0f0"></div>
<div class="a" style="left:166px;top:732px;width:1px;height:70px;background:#ececec"></div>
<div class="a" style="left:278px;top:711px;width:1px;height:91px;background:#ececec"></div>
<div class="a" style="left:438px;top:711px;width:1px;height:91px;background:#ececec"></div>
<span class="a gc" style="left:53px;top:715px">1</span><span class="a gc" style="left:84px;top:714px;color:#fff">2024</span><span class="a gc" style="left:172px;top:714px">JXH</span><span class="a gc gr" style="left:280px;top:714px">1,295,629.4</span>
<span class="a gc" style="left:53px;top:736px">2</span><span class="a gc" style="left:84px;top:735px">2024</span><span class="a gc" style="left:172px;top:735px">SBZ</span><span class="a gc gr" style="left:280px;top:735px">757,462,815.33</span>
<span class="a gc" style="left:53px;top:757px">3</span><span class="a gc" style="left:84px;top:756px">2025</span><span class="a gc" style="left:172px;top:756px">JXH</span><span class="a gc gr" style="left:280px;top:756px">3,898,875.48</span>
<span class="a gc" style="left:53px;top:778px">4</span><span class="a gc" style="left:84px;top:777px">2025</span><span class="a gc" style="left:172px;top:777px">SBZ</span><span class="a gc gr" style="left:280px;top:777px">723,397,779.14</span>
<!-- right side panel icons -->
<svg class="a" style="left:1579px;top:691px" width="15" height="16"><rect x="0.6" y="0.6" width="13.8" height="13" fill="none" stroke="#1a8ad4" stroke-width="1.2"/><rect x="7" y="0.6" width="7.4" height="13" fill="#1a8ad4"/><circle cx="3.5" cy="11" r="2.5" fill="#1a8ad4"/></svg>
<span class="a rot90" style="left:1595px;top:709px">面板</span>
<svg class="a" style="left:1579px;top:750px" width="15" height="15"><rect x="0.6" y="0.6" width="13.8" height="13.8" fill="#fff" stroke="#1a8ad4" stroke-width="1.2"/><rect x="0.6" y="0.6" width="13.8" height="3" fill="#1a8ad4"/><g fill="#1a8ad4"><rect x="2.5" y="5" width="2" height="2"/><rect x="6.5" y="5" width="2" height="2"/><rect x="10.5" y="5" width="2" height="2"/><rect x="4.5" y="7.5" width="2" height="2"/><rect x="8.5" y="7.5" width="2" height="2"/><rect x="2.5" y="10" width="2" height="2"/><rect x="6.5" y="10" width="2" height="2"/><rect x="10.5" y="10" width="2" height="2"/></g></svg>
<svg class="a" style="left:1578px;top:771px" width="16" height="16"><circle cx="8" cy="8" r="7" fill="none" stroke="#1a8ad4" stroke-width="1.3"/><g fill="#1a8ad4"><circle cx="6" cy="6" r="1"/><circle cx="10" cy="6" r="1"/><circle cx="6" cy="10" r="1"/><circle cx="10" cy="10" r="1"/></g></svg>
<svg class="a" style="left:1578px;top:795px" width="16" height="16"><rect x="0.6" y="5.6" width="14.8" height="9.8" fill="none" stroke="#1a8ad4" stroke-width="1.2"/><path d="M0.6 9h14.8M0.6 12.3h14.8M5.5 5.6v9.8M10.5 5.6v9.8" stroke="#1a8ad4" stroke-width="1"/><path d="M8 0.5v4M6 2.5h4" stroke="#f78a0f" stroke-width="1.2"/></svg>
<svg class="a" style="left:1578px;top:815px" width="16" height="16"><rect x="0.6" y="0.6" width="14.8" height="14.8" fill="none" stroke="#1a8ad4" stroke-width="1.2"/><rect x="0.6" y="0.6" width="14.8" height="3.5" fill="#1a8ad4"/><path d="M0.6 8h8M8.5 4v11.4" stroke="#1a8ad4" stroke-width="1.2"/><path d="M11 10h4M11 13h4" stroke="#1a8ad4" stroke-width="1"/></svg>
<!-- bottom toolbar -->
<svg class="a" style="left:59px;top:809px" width="16" height="16"><path d="M2.5 9A5.5 5.5 0 0 1 12 3.5M13.5 7A5.5 5.5 0 0 1 4 12.5" fill="none" stroke="#1aa0e0" stroke-width="2"/><path d="M10 0.5l4 3-4.5 2zM6 15.5l-4-3 4.5-2z" fill="#1aa0e0"/><path d="M6 6.5l2 2 2.5-3" fill="none" stroke="#1aa0e0" stroke-width="1"/></svg>
<span class="a bt" style="left:79px">刷新</span>
<svg class="a" style="left:118px;top:815px" width="8" height="5"><use href="#dd"/></svg>
<svg class="a" style="left:134px;top:809px" width="3" height="16"><use href="#grip"/></svg>
<svg class="a" style="left:145px;top:809px" width="16" height="16"><circle cx="8" cy="8" r="6.8" fill="none" stroke="#9a9a9a" stroke-width="1.2"/><path d="M4.5 8l2.5 2.5 4.5-5" fill="none" stroke="#9a9a9a" stroke-width="1.2"/></svg>
<span class="a bt" style="left:166px;color:#a0a0a0">保存</span>
<svg class="a" style="left:204px;top:815px" width="8" height="5"><path d="M0 0h7.5L3.75 4.5z" fill="#6a6a6a"/></svg>
<svg class="a" style="left:221px;top:810px" width="13" height="13"><rect x="0.6" y="0.6" width="11.8" height="11.8" fill="none" stroke="#9a9a9a" stroke-width="1.1"/><path d="M3.5 3.5l6 6M9.5 3.5l-6 6" stroke="#9a9a9a" stroke-width="1"/></svg>
<span class="a bt" style="left:238px;color:#a0a0a0">取消</span>
<div class="a" style="left:273px;top:805px;width:1px;height:26px;background:#8a8a8a"></div>
<svg class="a" style="left:283px;top:810px" width="16" height="14"><path d="M0 2h14M0 6.5h10M0 11h6" stroke="#9a9a9a" stroke-width="1.6"/><path d="M8 13l5-5" stroke="#9a9a9a" stroke-width="1.5"/></svg>
<svg class="a" style="left:308px;top:810px" width="16" height="14"><path d="M0 2h14M0 6.5h8M0 11h8M9 9h6M12 6v6" stroke="#9a9a9a" stroke-width="1.6"/></svg>
<svg class="a" style="left:331px;top:810px" width="16" height="14"><path d="M0 2h14M0 6.5h4M0 11h4" stroke="#9a9a9a" stroke-width="1.6"/><rect x="5.5" y="5" width="9" height="8" rx="2" fill="none" stroke="#9a9a9a" stroke-width="1.1" stroke-dasharray="2 1"/><path d="M10 6.5v5M7.5 9h5" stroke="#9a9a9a" stroke-width="1.1"/></svg>
<svg class="a" style="left:355px;top:810px" width="16" height="14"><path d="M0 2h14M0 6.5h8M0 11h14M10 6.5h5" stroke="#9a9a9a" stroke-width="1.6"/></svg>
<svg class="a" style="left:379px;top:809px" width="3" height="16"><use href="#grip"/></svg>
<svg class="a" style="left:387px;top:809px" width="14" height="16"><path d="M1.5 1v14M11.5 2L5 8l6.5 6" fill="none" stroke="#8a8a8a" stroke-width="1.8"/></svg>
<svg class="a" style="left:412px;top:809px" width="11" height="16"><path d="M9 2L2.5 8 9 14" fill="none" stroke="#8a8a8a" stroke-width="1.8"/></svg>
<svg class="a" style="left:435px;top:809px" width="11" height="16"><path d="M2 2l6.5 6L2 14" fill="none" stroke="#1a8ad4" stroke-width="1.8"/></svg>
<svg class="a" style="left:457px;top:809px" width="14" height="16"><path d="M1.5 2L8 8l-6.5 6M12 1v14" fill="none" stroke="#1a8ad4" stroke-width="1.8"/></svg>
<svg class="a" style="left:478px;top:809px" width="16" height="16"><path d="M1 5V1h4M11 1h4v4M15 11v4h-4M5 15H1v-4" fill="none" stroke="#9a9a9a" stroke-width="1.2"/><rect x="5" y="4.5" width="6" height="7" fill="none" stroke="#9a9a9a" stroke-width="1.1"/></svg>
<svg class="a" style="left:502px;top:809px" width="3" height="16"><use href="#grip"/></svg>
<svg class="a" style="left:516px;top:809px" width="15" height="16"><path d="M7.5 2v10M3.5 6l4-4 4 4" fill="none" stroke="#1a8ad4" stroke-width="1.8"/><path d="M1 10v5h13v-5" fill="none" stroke="#1a8ad4" stroke-width="1.5"/></svg>
<span class="a bt" style="left:536px;color:#000">导出数据...</span>
<svg class="a" style="left:608px;top:815px" width="8" height="5"><use href="#dd"/></svg>
<svg class="a" style="left:624px;top:809px" width="3" height="16"><use href="#grip"/></svg>
<svg class="a" style="left:631px;top:809px" width="15" height="15"><path d="M7.5 0.5l1.6 1.5 2.2-.5.6 2.2 2.2.6-.5 2.2 1.5 1.5-1.5 1.6.5 2.2-2.2.6-.6 2.2-2.2-.5-1.6 1.5-1.5-1.5-2.2.5-.6-2.2-2.2-.6.5-2.2L.5 7.5 2 6l-.5-2.2 2.2-.6.6-2.2L6 1.5z" fill="#1a8ad4"/><circle cx="7.5" cy="7.5" r="2.6" fill="#7fd0f5"/></svg>
<div class="a" style="left:654px;top:806px;width:54px;height:23px;background:#fff;border:1px solid #7a7a7a"></div>
<span class="a bt" style="left:658px;color:#000">200</span>
<svg class="a" style="left:715px;top:809px" width="16" height="16"><path d="M1 1l6.5 7L14 1M7.5 8v6" fill="none" stroke="#1a8ad4" stroke-width="1.7"/><path d="M1 10v5h13v-5" fill="none" stroke="#1a8ad4" stroke-width="1.3"/></svg>
<span class="a bt" style="left:737px;color:#000">4</span>
<svg class="a" style="left:751px;top:809px" width="3" height="16"><use href="#grip"/></svg>
<span class="a bt" style="left:780px;color:#505050;font-size:10px">···</span>
<span class="a bt" style="left:798px;color:#000;white-space:nowrap">4 行已获取 - 888ms, 2025-10-23 00:23:35</span>
<!-- status bar -->
<div class="a sep" style="left:779px"></div>
<div class="a sep" style="left:814px"></div>
<div class="a sep" style="left:841px"></div>
<div class="a sep" style="left:975px"></div>
<div class="a sep" style="left:1103px"></div>
<div class="a sep" style="left:1231px"></div>
<span class="a st" style="left:786px">CST</span>
<span class="a st" style="left:822px">zh</span>
<span class="a st" style="left:849px">可写</span>
<span class="a st" style="left:983px">智能插入</span>
<span class="a st" style="left:1111px">142 : 1 : 12568</span>
<span class="a st" style="left:1239px">Sel: 0 | 0</span>
<svg class="a" style="left:1315px;top:838px" width="3" height="16"><use href="#grip"/></svg>

<div class="a" style="left:0;top:0;width:1600px;height:860px;overflow:hidden;pointer-events:none">
<div class="a wm" style="left:-273.5px;top:139.0px">audit审计01(Audit1)<br>audit-172.18.210.237</div>
<div class="a wm" style="left:-273.5px;top:439.0px">audit审计01(Audit1)<br>audit-172.18.210.237</div>
<div class="a wm" style="left:-273.5px;top:739.0px">audit审计01(Audit1)<br>audit-172.18.210.237</div>
<div class="a wm" style="left:26.5px;top:139.0px">audit审计01(Audit1)<br>audit-172.18.210.237</div>
<div class="a wm" style="left:26.5px;top:439.0px">audit审计01(Audit1)<br>audit-172.18.210.237</div>
<div class="a wm" style="left:26.5px;top:739.0px">audit审计01(Audit1)<br>audit-172.18.210.237</div>
<div class="a wm" style="left:326.5px;top:139.0px">audit审计01(Audit1)<br>audit-172.18.210.237</div>
<div class="a wm" style="left:326.5px;top:439.0px">audit审计01(Audit1)<br>audit-172.18.210.237</div>
<div class="a wm" style="left:326.5px;top:739.0px">audit审计01(Audit1)<br>audit-172.18.210.237</div>
<div class="a wm" style="left:626.5px;top:139.0px">audit审计01(Audit1)<br>audit-172.18.210.237</div>
<div class="a wm" style="left:626.5px;top:439.0px">audit审计01(Audit1)<br>audit-172.18.210.237</div>
<div class="a wm" style="left:626.5px;top:739.0px">audit审计01(Audit1)<br>audit-172.18.210.237</div>
<div class="a wm" style="left:926.5px;top:139.0px">audit审计01(Audit1)<br>audit-172.18.210.237</div>
<div class="a wm" style="left:926.5px;top:439.0px">audit审计01(Audit1)<br>audit-172.18.210.237</div>
<div class="a wm" style="left:926.5px;top:739.0px">audit审计01(Audit1)<br>audit-172.18.210.237</div>
<div class="a wm" style="left:1226.5px;top:139.0px">audit审计01(Audit1)<br>audit-172.18.210.237</div>
<div class="a wm" style="left:1226.5px;top:439.0px">audit审计01(Audit1)<br>audit-172.18.210.237</div>
<div class="a wm" style="left:1226.5px;top:739.0px">audit审计01(Audit1)<br>audit-172.18.210.237</div>
<div class="a wm" style="left:1526.5px;top:139.0px">audit审计01(Audit1)<br>audit-172.18.210.237</div>
<div class="a wm" style="left:1526.5px;top:439.0px">audit审计01(Audit1)<br>audit-172.18.210.237</div>
<div class="a wm" style="left:1526.5px;top:739.0px">audit审计01(Audit1)<br>audit-172.18.210.237</div>
</div>
<div id="taskbar" class="a">
<svg class="a" style="left:16px;top:12px" width="17" height="17"><path d="M0 2.3L7 1.3V7.9H0zM8 1.1L17 0V7.9H8zM0 8.9H7V15.6L0 14.6zM8 8.9H17V17L8 15.8z" fill="#fff"/></svg>
<svg class="a" style="left:63px;top:11px" width="18" height="18"><circle cx="11" cy="6.8" r="5.6" fill="none" stroke="#fff" stroke-width="1.3"/><path d="M7 10.8L1 16.8" stroke="#fff" stroke-width="1.5"/></svg>
<svg class="a" style="left:111px;top:12px" width="18" height="17"><path d="M0.5 0.5h11M0.5 16h11M2 3.5h8v9H2z" fill="none" stroke="#fff" stroke-width="1.2"/><path d="M14.5 0v4M14.5 6v4M14.5 12v4" stroke="#fff" stroke-width="1.4"/></svg>
<svg class="a" style="left:156px;top:6px" width="30" height="30"><text x="15.5" y="24.5" text-anchor="middle" font-family="Liberation Sans" font-weight="bold" font-size="36" fill="#2db3ef">e</text><path d="M5.5 25c-2-2.5 0-8 4-12.5 5-5.5 12-8.5 14.5-6.5 1.2 1-.2 3.5-2 5.5" fill="none" stroke="#f2c21a" stroke-width="1.9"/></svg>
<svg class="a" style="left:209px;top:10px" width="23" height="20"><path d="M0.5 2h7.5l1.5 1.5h12v15H0.5z" fill="#f6d36b"/><path d="M0.5 4.5h21v14H0.5z" fill="#fde59a"/><path d="M4 20v-6.5q0-1.5 1.5-1.5h11q1.5 0 1.5 1.5V20h-3.5v-4.5h-7V20z" fill="#35aee8"/></svg>
<svg class="a" style="left:257px;top:8px" width="24" height="24"><use href="#beaver"/></svg>
<div class="a" style="left:294px;top:0;width:48px;height:40px;background:#333"></div>
<div class="a" style="left:294px;top:37px;width:48px;height:3px;background:#76b9ed"></div>
<svg class="a" style="left:306px;top:8px" width="24" height="24"><use href="#beaver"/></svg>
<svg class="a" style="left:1347px;top:16px" width="14" height="8"><path d="M1 7l6-6 6 6" fill="none" stroke="#fff" stroke-width="1.2"/></svg>
<svg class="a" style="left:1373px;top:12px" width="14" height="17"><path d="M1.5 0.5h6v4h1.5v11H0.5v-11h1z" fill="none" stroke="#fff" stroke-width="1"/><path d="M3 2h1M5 2h1" stroke="#fff"/><path d="M8 14l2 2 3.5-4" fill="none" stroke="#bbb" stroke-width="1"/></svg>
<svg class="a" style="left:1393px;top:13px" width="18" height="15"><path d="M4.5 2.5h12v8h-12z" fill="none" stroke="#fff" stroke-width="1"/><path d="M10.5 10.5v3M7 14.5h7M0.5 0.5h4v4h-4z" fill="none" stroke="#fff" stroke-width="1"/><path d="M2.5 4.5v10h4" fill="none" stroke="#fff" stroke-width="1"/></svg>
<svg class="a" style="left:1417px;top:13px" width="18" height="15"><path d="M0.5 5h3l4-4v13l-4-4h-3z" fill="none" stroke="#fff" stroke-width="1"/><path d="M9.5 4.5a4 4 0 0 1 0 6M12 2.5a7 7 0 0 1 0 10M14.5 0.5a10 10 0 0 1 0 14" fill="none" stroke="#fff" stroke-width="1"/></svg>
<span class="a" style="left:1443px;top:12px;font-size:13px;line-height:16px;color:#fff">ENG</span>
<span class="a" style="left:1498px;top:3px;font-size:12.5px;line-height:16px;color:#fff">0:24</span>
<span class="a" style="left:1477px;top:21px;font-size:12.8px;line-height:16px;color:#fff">2025/10/23</span>
<svg class="a" style="left:1559px;top:12px" width="17" height="17"><path d="M0.5 0.5h15v12h-6l-2.5 2.5L4.5 12.5h-4z" fill="none" stroke="#fff" stroke-width="1"/></svg>
<div class="a" style="left:1596px;top:0;width:1px;height:40px;background:#555"></div>
</div>

</body></html>
